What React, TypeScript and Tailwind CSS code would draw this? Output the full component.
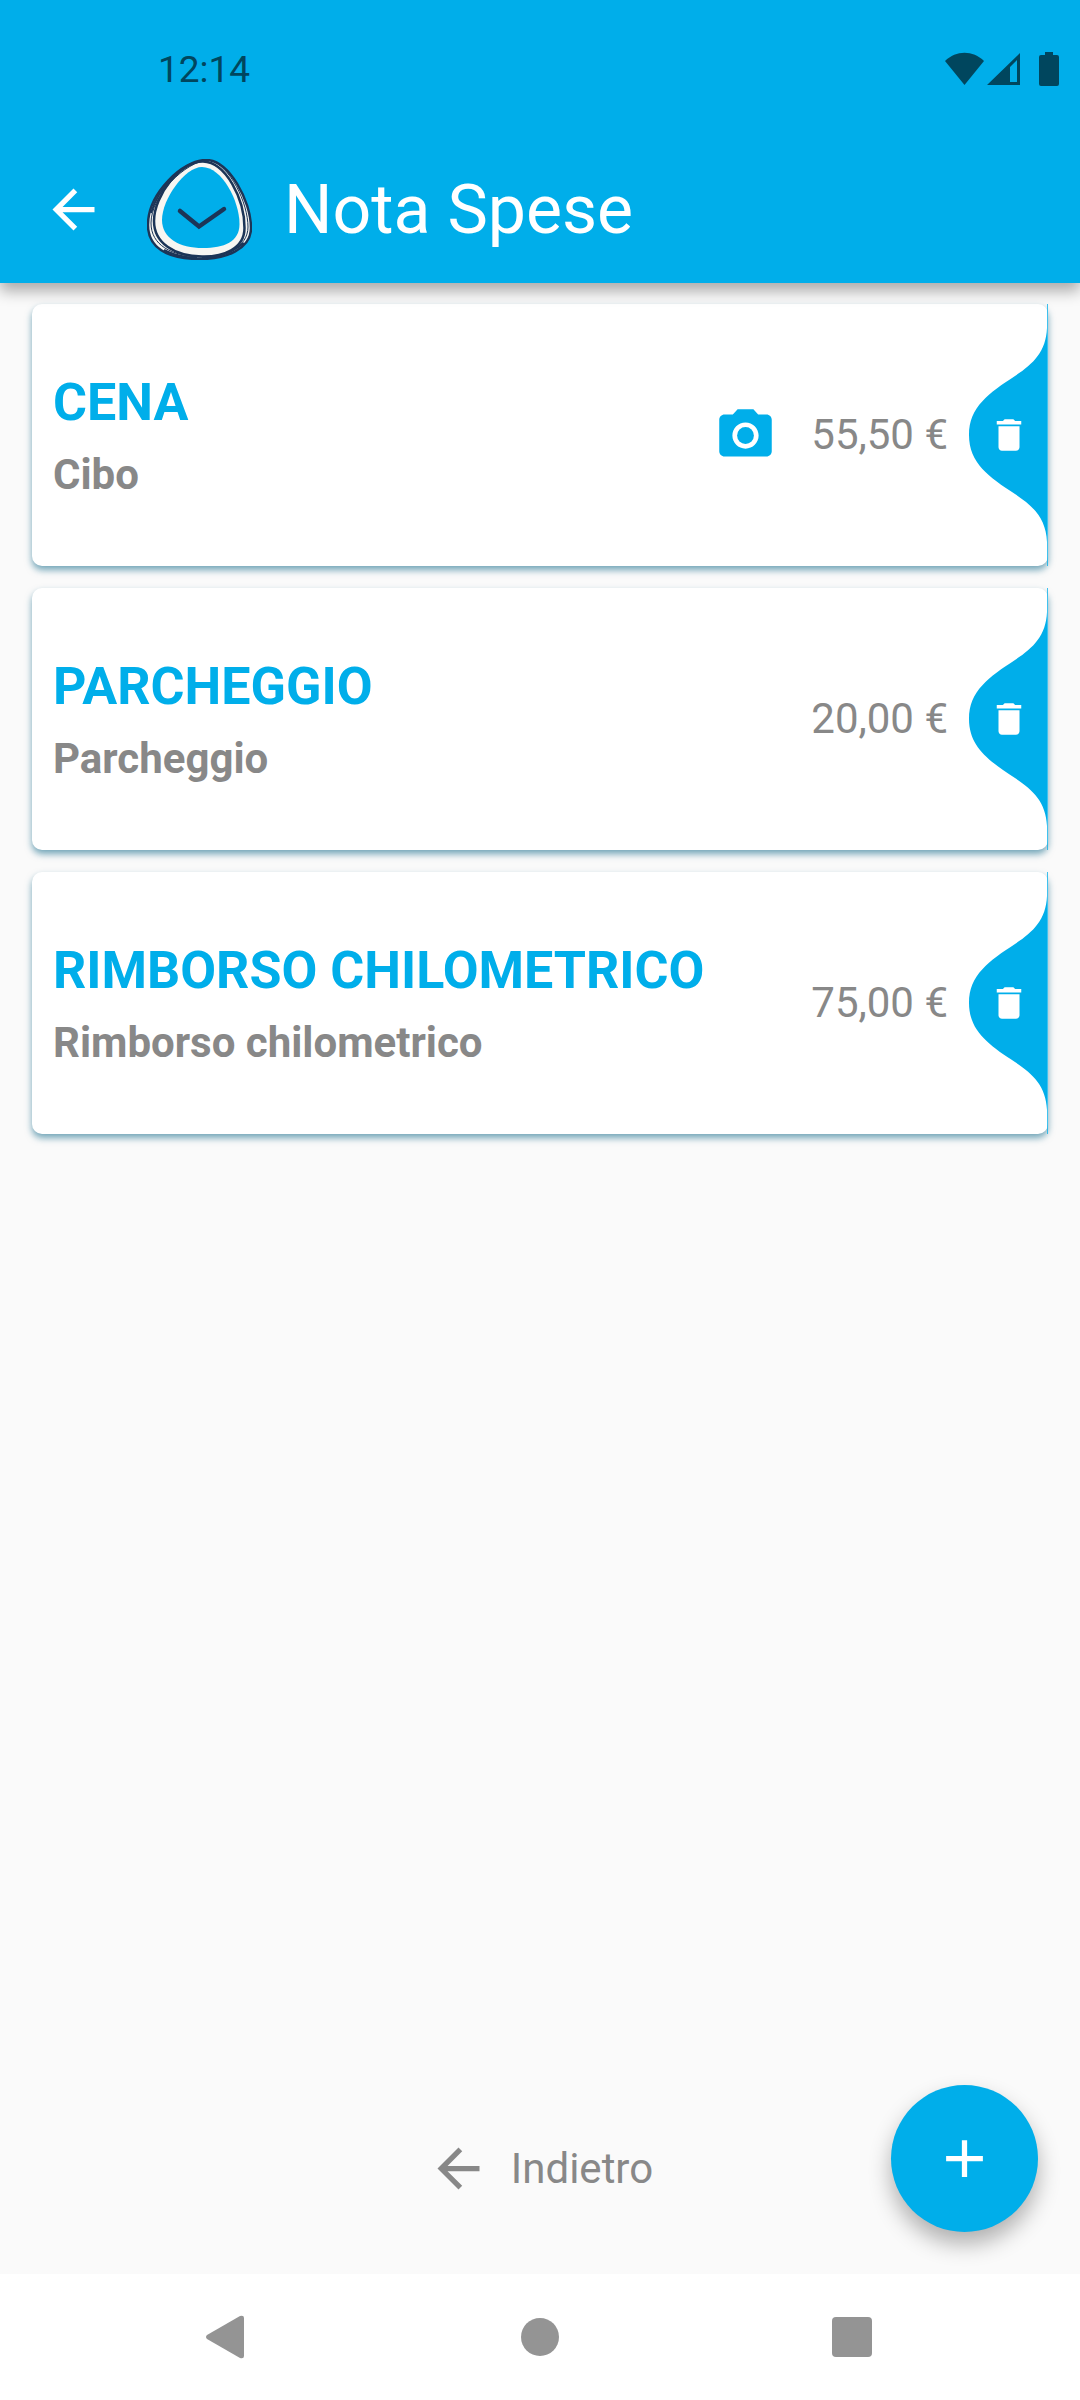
import { MdAdd, MdArrowBack, MdCameraAlt, MdDelete } from 'react-icons/md';

interface Expense {
  title: string;
  category: string;
  amount: string;
  hasPhoto?: boolean;
}

const expenses: Expense[] = [
  { title: 'CENA', category: 'Cibo', amount: '55,50 €', hasPhoto: true },
  { title: 'PARCHEGGIO', category: 'Parcheggio', amount: '20,00 €' },
  {
    title: 'RIMBORSO CHILOMETRICO',
    category: 'Rimborso chilometrico',
    amount: '75,00 €',
  },
];

function Logo() {
  return (
    <svg width="105" height="101" viewBox="0 0 105 101" fill="none">
      <path
        d="M59 1C82 1 104 42 104 69C104 90 79 100 53 100C19 100 1 88 1 66C1 34 36 1 59 1Z"
        fill="#f7f6f2"
        stroke="#1c3557"
        strokeWidth="2.5"
      />
      <path
        d="M62 1C83 6 101 44 101 68C101 88 78 99 54 98C24 97 4 86 4 64C4 37 38 2 62 1Z"
        stroke="#1c3557"
        strokeWidth="1"
      />
      <path
        d="M56 2.500C79 3 97.500 40 97.500 69C97.500 90 76 98 55 97.500C27 97 7 84 7 62C7 36 34 2 56 2.500Z"
        stroke="#1c3557"
        strokeWidth="2.5"
      />
      <path
        d="M25 20Q10 34 4 54M97 84Q80 98 55 99M17 91Q30 98 50 99"
        stroke="#1c3557"
        strokeWidth="2"
      />
      <path
        d="M55 8C75 8 92.500 42 92.500 65C92.500 83 77 89 56 89C32 89 15 79 15 61C15 40 38 8 55 8Z"
        fill="#00aeea"
      />
      <path
        d="M33 52L52 67.500L77 50"
        stroke="#1c3557"
        strokeWidth="4.5"
        strokeLinecap="round"
      />
    </svg>
  );
}

function StatusBar() {
  return (
    <div className="flex h-[136px] items-center justify-between pt-0.5 pr-[21px] pl-[158px] text-[#00465e]">
      <span className="text-[37px] leading-none">12:14</span>
      <div className="flex items-center">
        <svg width="39" height="34" viewBox="0 0 39 34" fill="currentColor">
          <path d="M0 9C11-2 28-2 39 9L19.500 33Z" />
        </svg>
        <svg
          className="ml-[3px]"
          width="33"
          height="34"
          viewBox="0 0 33 34"
          fill="currentColor"
        >
          <path
            fillRule="evenodd"
            d="M33 1V33H0ZM30 8L23 15V30H30Z"
          />
        </svg>
        <svg
          className="ml-[19px]"
          width="20"
          height="34"
          viewBox="0 0 20 34"
          fill="currentColor"
        >
          <path d="M6 0H14V3H18Q20 3 20 5V32Q20 34 18 34H2Q0 34 0 32V5Q0 3 2 3H6Z" />
        </svg>
      </div>
    </div>
  );
}

function Header() {
  return (
    <header className="relative z-10 bg-[#00aeea] shadow-[0_8px_14px_rgba(0,0,0,0.32)]">
      <StatusBar />
      <div className="flex h-[147px] items-center px-[42px] text-white">
        <button aria-label="Torna indietro">
          <MdArrowBack size={63} />
        </button>
        <div className="ml-[42px]">
          <Logo />
        </div>
        <h1 className="ml-8 text-[68px] leading-none">Nota Spese</h1>
      </div>
    </header>
  );
}

function ExpenseCard({ title, category, amount, hasPhoto }: Expense) {
  return (
    <li className="relative flex h-[262px] items-center rounded-[10px] bg-white pr-[100px] pl-[21px] shadow-[0_4px_7px_rgba(0,95,130,0.55)]">
      <div className="flex flex-1 flex-col gap-4 pt-0.5 font-bold">
        <h2 className="text-[52px] leading-[62px] text-[#00aeea]">{title}</h2>
        <p className="text-[42px] leading-[50px] text-[#888888]">{category}</p>
      </div>
      {hasPhoto && (
        <button aria-label={`Foto di ${title}`} className="text-[#00aeea]">
          <MdCameraAlt size={63} />
        </button>
      )}
      <span className="ml-[34px] text-[42px] leading-[50px] text-[#888888]">
        {amount}
      </span>
      <button
        aria-label={`Elimina ${title}`}
        className="absolute inset-y-0 right-0 flex w-[79px] items-center justify-center text-white"
      >
        <svg
          className="absolute inset-0 h-full w-full text-[#00aeea]"
          viewBox="0 0 79 262"
          preserveAspectRatio="none"
          fill="currentColor"
        >
          <path d="M78 24C77 48 64 60 46 72C20 89 0 103 0 131C0 159 20 173 46 190C64 202 77 214 78 238Z" />
          <path d="M78 0H79V262H78Z" opacity="0.75" />
        </svg>
        <MdDelete size={42} className="relative" />
      </button>
    </li>
  );
}

function NavBar() {
  return (
    <nav className="grid h-[126px] grid-cols-3 place-items-center bg-white px-18 text-[#949494]">
      <button aria-label="Indietro">
        <svg width="44" height="44" viewBox="0 0 44 44" fill="currentColor">
          <path d="M1 20Q-1 22 1 24L34 43Q38 44 38 41V3Q38 0 34 1Z" />
        </svg>
      </button>
      <button aria-label="Home" className="size-[38px] rounded-full bg-current" />
      <button aria-label="Recenti" className="size-10 rounded-[4px] bg-current" />
    </nav>
  );
}

export default function App() {
  return (
    <div className="flex min-h-screen flex-col bg-[#fafafa] font-['Roboto',sans-serif]">
      <Header />
      <main className="relative flex flex-1 flex-col px-8 pt-[21px]">
        <ul className="flex flex-col gap-[22px]">
          {expenses.map((expense) => (
            <ExpenseCard key={expense.title} {...expense} />
          ))}
        </ul>
        <button className="mt-auto mb-[74px] flex items-center gap-[21px] self-center text-[42px] leading-[50px] text-[#888888]">
          <MdArrowBack size={63} />
          Indietro
        </button>
        <button
          aria-label="Aggiungi spesa"
          className="absolute right-[42px] bottom-[42px] flex size-[147px] items-center justify-center rounded-full bg-[#00aeea] text-white shadow-[0_12px_22px_rgba(0,0,0,0.3)]"
        >
          <MdAdd size={63} />
        </button>
      </main>
      <NavBar />
    </div>
  );
}
